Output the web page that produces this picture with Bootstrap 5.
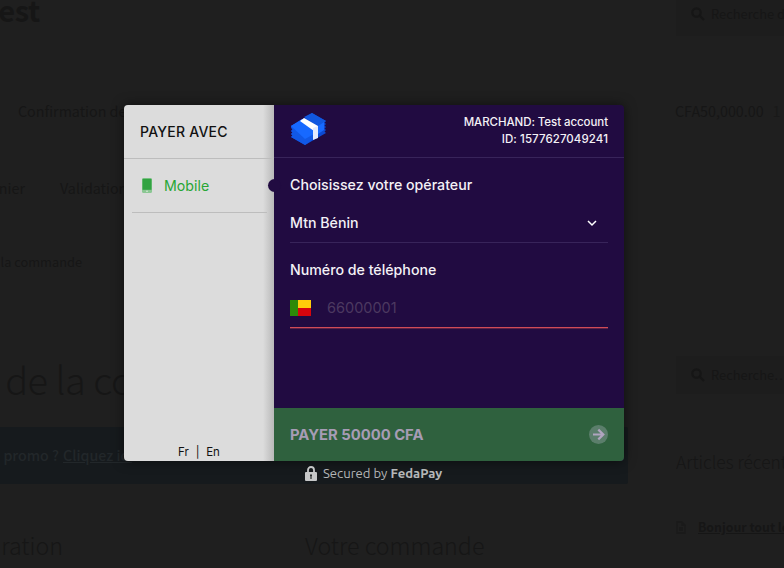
<!DOCTYPE html>
<html lang="fr">
<head>
<meta charset="utf-8">
<meta name="viewport" content="width=device-width, initial-scale=1">
<title>FedaPay</title>
<link href="https://cdn.jsdelivr.net/npm/bootstrap@5.3.0/dist/css/bootstrap.min.css" rel="stylesheet">
<style>
body{width:784px;height:568px;overflow:hidden;background:#1f1f1f;font-family:Inter,sans-serif}
.shop{height:568px;overflow:hidden;color:#161616;font-family:"Noto Sans CJK SC","Noto Sans",sans-serif;white-space:nowrap}
.shop .line{display:flex;align-items:center;flex:none;overflow:hidden}
.main-col{width:628px;flex:none}
.side-col{width:108px;margin-left:48px;flex:none}
.clip-left{display:flex;justify-content:flex-end;flex:none}
.h-top{height:36px}
.site-title{width:40px;font-size:29px;font-weight:700;line-height:36px;margin-top:-19px;letter-spacing:-.3px}
.finder{background:#1d1d1d;font-size:12.9px;padding-left:15px}
.finder svg{width:14px;height:14px;margin-right:6px;flex:none}
.finder.h-top{padding-bottom:8px}
.finder.short{height:38px}
.nav-a{height:36px;margin-top:57px;font-size:14.3px;line-height:36px}
.nav-b{height:36px;margin-top:41px;font-size:14.3px;line-height:36px}
.crumb{height:36px;margin-top:38px;font-size:12.8px}
.title-big{font-size:38px;font-weight:300;line-height:60px;height:60px;margin-top:69px;letter-spacing:-.5px}
.promo{height:57px;margin-top:18px;background:#161a1d;font-size:14.2px;font-weight:500;color:#22272a;border-radius:0 2px 2px 0}
.sub{font-size:23.2px;font-weight:300;height:40px;line-height:40px;margin-top:41px}
.recent{height:40px;margin-top:48px;font-size:17.4px;font-weight:300}
.post{height:30px;margin-top:30px;font-size:12.3px;font-weight:700}
.dialog-box{position:absolute;left:124px;top:105px;width:500px;height:356px;border-radius:4px;overflow:hidden}
.shade{position:absolute;left:124px;top:105px;width:500px;height:356px;border-radius:4px;box-shadow:0 0 12px rgba(0,0,0,.55)}
.methods{width:150px;background:linear-gradient(90deg,#dcdcdc 0,#dcdcdc 139px,#b9b9b9 150px);color:#111;position:relative}
.methods h1{height:54px;font-size:14px;font-weight:500;margin:0;padding:2px 0 0 16px;border-bottom:1px solid #bdbdbd;letter-spacing:.25px}
.method{height:54px;margin:0 7px 0 8px;padding-left:10px;border-bottom:1px solid #bdbdbd;color:#28a735;font-size:14.2px}
.method svg{margin-right:12px}
.dot{position:absolute;right:-7px;top:74px;width:13px;height:13px;border-radius:50%;background:#210b41}
.langs{font-size:11.5px;line-height:16px;margin-bottom:1px;word-spacing:3.5px}
.pay{width:350px;background:#210b41;color:#f4f1f6;font-size:14.2px;font-weight:500}
.merchant{height:53px;border-bottom:1px solid #38245a;font-size:11.5px;letter-spacing:-.07px;line-height:17px;padding:0 16px}
.merchant-id{letter-spacing:.08px}
.fields{height:250px;padding:0 16px}
.caption-row{height:22px;line-height:22px;margin-top:16px}
.choice{height:39px;margin-top:8px;border-bottom:1px solid #38245a;padding-right:11px}
.phone{height:39px;margin-top:8px;border-bottom:1px solid #d04b57;box-shadow:0 1px #5e2146;color:#4c3960;font-weight:400;font-size:14.5px}
.submit{height:53px;background:#2f613e;color:#a69cb5;font-size:14.8px;font-weight:700;padding:0 16px}
.submit span{padding-top:2px}
.secured{position:absolute;left:305px;top:463px;height:20px;color:#b4b6b7;font-family:Ubuntu,"Noto Sans",sans-serif;font-size:13.1px;line-height:20px}
</style>
<script src="https://cdn.jsdelivr.net/npm/bootstrap@5.3.0/dist/js/bootstrap.bundle.min.js"></script>
</head>
<body class="position-relative">
<div class="shop d-flex">
  <div class="main-col">
    <div class="line h-top"><span class="clip-left site-title">test</span></div>
    <div class="line nav-a"><span style="padding-left:18px">Confirmation de</span></div>
    <div class="line nav-b"><span class="clip-left" style="width:25px">Panier</span><span style="margin-left:35px">Validation</span></div>
    <div class="line crumb"><span class="clip-left" style="width:82px">Validation de la commande</span></div>
    <div class="line title-big"><span class="clip-left" style="width:133px">Validation de la co</span></div>
    <div class="line promo"><span class="clip-left" style="width:59px">Avez-vous un code promo ?</span><u style="margin-left:4px">Cliquez ici</u></div>
    <div class="line sub"><span class="clip-left" style="width:63px">Facturation</span><span style="margin-left:242px">Votre commande</span></div>
  </div>
  <div class="side-col">
    <div class="line h-top finder"><svg viewBox="0 0 14 14" fill="none" stroke="currentColor" stroke-width="2.2"><circle cx="5.5" cy="5.5" r="4.2"/><path d="M8.7 8.7 13 13"/></svg><span>Recherche de produits</span></div>
    <div class="line nav-a" style="margin-left:-1px"><span>CFA50,000.00</span><span style="margin-left:9px;opacity:.6">1 article</span></div>
    <div class="line finder short" style="margin-top:227px"><svg viewBox="0 0 14 14" fill="none" stroke="currentColor" stroke-width="2.2"><circle cx="5.5" cy="5.5" r="4.2"/><path d="M8.7 8.7 13 13"/></svg><span>Recherche…</span></div>
    <div class="line recent">Articles récents</div>
    <div class="line post"><svg width="10" height="13" viewBox="0 0 10 13" fill="none" stroke="#1a1a1a" stroke-width="1.4" style="margin-right:12px;flex:none"><path d="M1 1h5l3 3v8H1zM6 1v3h3M3 7h4M3 9h4"/></svg><u>Bonjour tout le monde !</u></div>
  </div>
</div>

<div class="shade"></div>
<div class="dialog-box d-flex">
  <aside class="methods d-flex flex-column">
    <h1 class="d-flex align-items-center">PAYER AVEC</h1>
    <div class="method d-flex align-items-center">
      <svg width="10" height="15" viewBox="0 0 10 15"><rect width="10" height="15" rx="1.5" fill="#8bc793"/><rect x=".5" y=".8" width="9" height="11" fill="#31a341"/><circle cx="5" cy="13.3" r=".8" fill="#e2eee3"/></svg><span>Mobile</span>
    </div>
    <span class="dot"></span>
    <div class="langs text-center mt-auto">Fr | En</div>
  </aside>
  <section class="pay d-flex flex-column">
    <header class="merchant d-flex justify-content-between align-items-center">
      <svg width="37" height="34" viewBox="0 0 37 34" class="mb-1">
        <path d="m1 14 4-2L22 1l14 8-1.500 1.500L36 12l-1.500 1.500L36 15l-1.500 1.500L36 18l-1.500 1.500L36 21 15 33 1 25l1.500-1.500L1 22l1.500-1.500L1 19l1.500-1.500L1 16z" fill="#0d4ad2"/>
        <path d="m1 14 11-6 12 8v11l-9 6L1 25l1.500-1.500L1 22l1.500-1.500L1 19l1.500-1.500z" fill="#1158e6"/>
        <path d="m1 14 11-7 12 9v6l-9 5z" fill="#1769ff"/>
        <path d="m14 5 8-4 14 8-8 5z" fill="#1158e0"/>
        <path d="m28 14 6-4v8l-6 4z" fill="#176aff"/>
        <path d="m10 9 4-3 14 8v3l-4 2z" fill="#fff"/><path d="m23 16 5-2v12l-5 2z" fill="#e4ebff"/>
      </svg>
      <div class="text-end">MARCHAND: Test account<br><span class="merchant-id">ID: 1577627049241</span></div>
    </header>
    <div class="fields">
      <div class="caption-row">Choisissez votre opérateur</div>
      <div class="choice d-flex align-items-center justify-content-between"><span>Mtn Bénin</span><svg width="10" height="7" viewBox="0 0 10 7" fill="none" stroke="#fff" stroke-width="1.5"><path d="m1 1 4 4 4-4"/></svg></div>
      <div class="caption-row">Numéro de téléphone</div>
      <div class="phone d-flex align-items-center"><svg width="21" height="16" viewBox="0 0 21 16" style="margin-right:16px"><path fill="#2d8a08" d="M0 0h8v16H0z"/><path fill="#ffce0a" d="M8 0h13v8H8z"/><path fill="#d7050d" d="M8 8h13v8H8z"/></svg><span>66000001</span></div>
    </div>
    <div class="submit d-flex align-items-center justify-content-between"><span>PAYER 50000 CFA</span><svg width="19" height="19" viewBox="0 0 19 19" fill="none"><circle cx="9.5" cy="9.5" r="9.5" fill="#5b7e6b"/><path d="M4 9.5h10M9.3 4.6l5 4.900-5 4.900" stroke="#b0a4bf" stroke-width="2.2"/></svg></div>
  </section>
</div>
<div class="secured d-flex align-items-center"><svg width="12" height="15" viewBox="0 0 12 15" style="margin-right:6px"><path d="M3 7V4a3 3 0 0 1 6 0v3" fill="none" stroke="#c6c7c8" stroke-width="1.8"/><rect y="6" width="12" height="9" rx="1" fill="#c6c7c8"/><path d="M5 8.5h2v1.2l-.4.6V13H5.4v-2.700L5 9.700z" fill="#252829"/></svg><span>Secured by <b>FedaPay</b></span></div>
</body>
</html>
